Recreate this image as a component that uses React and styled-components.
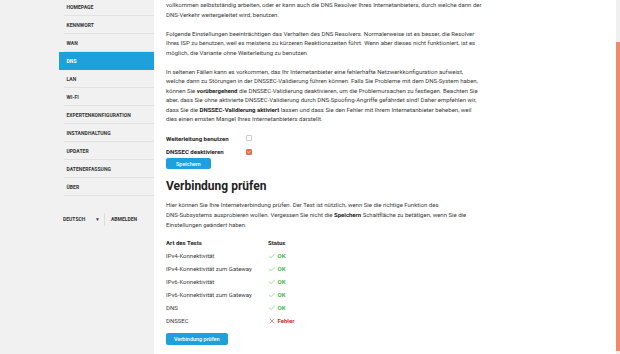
import React from 'react';
import styled, { createGlobalStyle } from 'styled-components';
import { Check, X } from 'lucide-react';

const GlobalStyle = createGlobalStyle`
  html, body {
    margin: 0;
    padding: 0;
    background: #ffffff;
    overflow: hidden;
  }
  body {
    font-family: Roboto, "Liberation Sans", Arial, sans-serif;
    color: #3a3a3a;
  }
`;

const Page = styled.div`
  display: flex;
  width: 620px;
  height: 354px;
  overflow: hidden;
`;

// linke Navigation
const Sidebar = styled.aside`
  width: 154px;
  flex: 0 0 154px;
  background: #f1f1f1;
  padding-left: 64px;
  box-sizing: border-box;
`;

const Menu = styled.ul`
  list-style: none;
  margin: -2px 0 0;
  padding: 0;
`;

const MenuItem = styled.li`
  height: 17px;
  display: flex;
  align-items: center;
  border-bottom: 1px solid ${p => (p.$active ? '#1ea0dc' : '#e2e2e2')};
  background: ${p => (p.$active ? '#1ea0dc' : 'transparent')};
  color: ${p => (p.$active ? '#ffffff' : '#333333')};
  margin-left: ${p => (p.$active ? '-5px' : '0')};
  padding-left: ${p => (p.$active ? '7.5px' : '2.5px')};
  font-size: 5px;
  font-weight: 700;
  letter-spacing: 0.05px;
  text-transform: uppercase;
`;

const LangBar = styled.div`
  display: flex;
  align-items: center;
  height: 14px;
  margin-top: 16px;
  margin-left: -1px;
  font-size: 5px;
  font-weight: 700;
  color: #333333;
`;

const LangSelect = styled.span`
  width: 37px;
  display: flex;
  justify-content: space-between;
  align-items: center;
  padding-right: 4px;
`;

const Caret = styled.span`
  font-size: 5px;
  color: #444;
`;

const Divider = styled.span`
  width: 1px;
  height: 13px;
  background: #dddddd;
  margin-right: 6px;
`;

// Hauptbereich
const Main = styled.main`
  flex: 1;
  padding-left: 12px;
  border-top: 1px solid #e6e6e6;
  margin-top: -1px;
  overflow: hidden;
  font-size: 6px;
`;

const Para = styled.p`
  margin: 0 0 ${p => p.$gap || '9.5px'};
  line-height: ${p => p.$lh || '9.5px'};
  white-space: nowrap;
  color: #3a3a3a;

  b {
    color: #222;
    font-weight: 700;
  }
`;

const OptionRow = styled.div`
  display: flex;
  align-items: center;
  height: 13.4px;
`;

const OptionLabel = styled.span`
  width: 80px;
  font-weight: 700;
  color: #222;
`;

const Box = styled.span`
  width: 4px;
  height: 4px;
  border: 0.6px solid ${p => (p.$checked ? '#e0714f' : '#c9c9c9')};
  background: ${p => (p.$checked ? '#e0714f' : '#fff')};
  border-radius: 1px;
  display: flex;
  align-items: center;
  justify-content: center;
  color: #fff;
`;

const Button = styled.button`
  display: block;
  height: ${p => p.$h || '11px'};
  padding: 0 ${p => p.$px || '7px'};
  border: none;
  border-radius: 2px;
  background: #1ea0dc;
  color: #ffffff;
  font-family: Roboto, "Liberation Sans", Arial, sans-serif;
  font-size: 5.5px;
  font-weight: 500;
  margin-top: ${p => p.$mt || '0'};
`;

const Heading = styled.h2`
  margin: 9.5px 0 7px;
  font-size: 12px;
  line-height: 14px;
  font-weight: 700;
  color: #222;
`;

const Table = styled.div`
  margin-top: 6.5px;
  display: grid;
  grid-template-columns: 102px auto;
  grid-auto-rows: 13px;
  align-items: center;
  width: 200px;
`;

const Th = styled.span`
  font-weight: 700;
  color: #222;
`;

const Td = styled.span`
  color: #3a3a3a;
`;

const Status = styled.span`
  display: flex;
  align-items: center;
  gap: 1.5px;
  font-weight: 700;
  color: ${p => (p.$ok ? '#4cb84c' : '#d8262c')};
`;

const ScrollTrack = styled.div`
  width: 4px;
  flex: 0 0 4px;
  background: #f0f0f0;
  padding-top: 42px;
  padding-bottom: 3px;
  box-sizing: border-box;
  display: flex;
`;

const ScrollThumb = styled.div`
  flex: 1;
  background: #ee8b68;
`;

const menu = [
  'Homepage',
  'Kennwort',
  'WAN',
  'DNS',
  'LAN',
  'Wi-Fi',
  'Expertenkonfiguration',
  'Instandhaltung',
  'Updater',
  'Datenerfassung',
  'Über',
];

const tests = [
  ['IPv4-Konnektivität', true],
  ['IPv4-Konnektivität zum Gateway', true],
  ['IPv6-Konnektivität', true],
  ['IPv6-Konnektivität zum Gateway', true],
  ['DNS', true],
  ['DNSSEC', false],
];

export default function App() {
  return (
    <>
      <GlobalStyle />
      <Page>
        <Sidebar>
          <Menu>
            {menu.map(item => (
              <MenuItem key={item} $active={item === 'DNS'}>
                {item}
              </MenuItem>
            ))}
          </Menu>
          <LangBar>
            <LangSelect>
              <span>DEUTSCH</span>
              <Caret>▼</Caret>
            </LangSelect>
            <Divider />
            <span>ABMELDEN</span>
          </LangBar>
        </Sidebar>

        <Main>
          <Para>
            vollkommen selbstständig arbeiten, oder er kann auch die DNS Resolver Ihres Internetanbieters, durch welche dann der
            <br />
            DNS-Verkehr weitergeleitet wird, benutzen.
          </Para>
          <Para>
            Folgende Einstellungen beeinträchtigen das Verhalten des DNS Resolvers. Normalerweise ist es besser, die Resolver
            <br />
            Ihres ISP zu benutzen, weil es meistens zu kürzeren Reaktionszeiten führt. Wenn aber dieses nicht funktioniert, ist es
            <br />
            möglich, die Variante ohne Weiterleitung zu benutzen.
          </Para>
          <Para $gap="8px">
            In seltenen Fällen kann es vorkommen, das Ihr Internetanbieter eine fehlerhafte Netzwerkkonfiguration aufweist,
            <br />
            welche dann zu Störungen in der DNSSEC-Validierung führen können. Falls Sie Probleme mit dem DNS-System haben,
            <br />
            können Sie <b>vorübergehend</b> die DNSSEC-Validierung deaktivieren, um die Problemursachen zu festlegen. Beachten Sie
            <br />
            aber, dass Sie ohne aktivierte DNSSEC-Validierung durch DNS-Spoofing-Angriffe gefährdet sind! Daher empfehlen wir,
            <br />
            dass Sie die <b>DNSSEC-Validierung aktiviert</b> lassen und dass Sie den Fehler mit Ihrem Internetanbieter beheben, weil
            <br />
            dies einen ernsten Mangel Ihres Internetanbieters darstellt.
          </Para>

          <OptionRow>
            <OptionLabel>Weiterleitung benutzen</OptionLabel>
            <Box />
          </OptionRow>
          <OptionRow>
            <OptionLabel>DNSSEC deaktivieren</OptionLabel>
            <Box $checked>
              <Check size={4} strokeWidth={4} />
            </Box>
          </OptionRow>
          <Button $px="10px">Speichern</Button>

          <Heading>Verbindung prüfen</Heading>
          <Para $lh="10px" $gap="0">
            Hier können Sie Ihre Internetverbindung prüfen. Der Test ist nützlich, wenn Sie die richtige Funktion des
            <br />
            DNS-Subsystems ausprobieren wollen. Vergessen Sie nicht die <b>Speichern</b> Schaltfläche zu betätigen, wenn Sie die
            <br />
            Einstellungen geändert haben.
          </Para>

          <Table>
            <Th>Art des Tests</Th>
            <Th>Status</Th>
            {tests.map(([name, ok]) => (
              <React.Fragment key={name}>
                <Td>{name}</Td>
                <Status $ok={ok}>
                  {ok ? <Check size={8} strokeWidth={1.6} /> : <X size={8} strokeWidth={1.6} />}
                  {ok ? 'OK' : 'Fehler'}
                </Status>
              </React.Fragment>
            ))}
          </Table>

          <Button $mt="6px" $h="12px" $px="8px">Verbindung prüfen</Button>
        </Main>

        <ScrollTrack>
          <ScrollThumb />
        </ScrollTrack>
      </Page>
    </>
  );
}
